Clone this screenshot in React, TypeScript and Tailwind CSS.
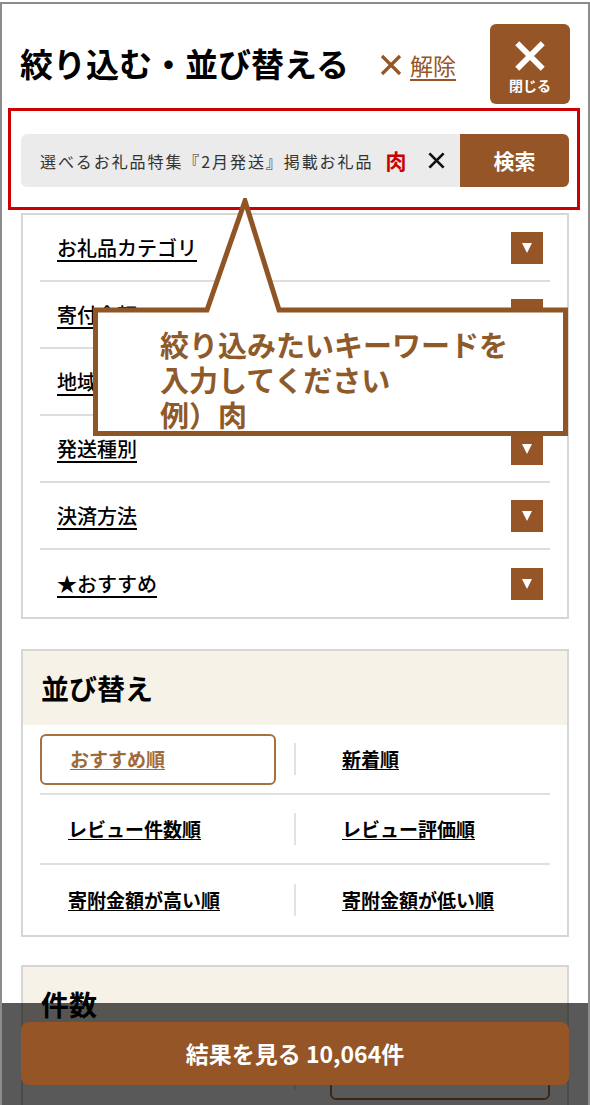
import React from "react";

const FONT = '"Noto Sans CJK JP", "Noto Sans", sans-serif';

const filters = ["お礼品カテゴリ", "寄付金額", "地域", "発送種別", "決済方法", "★おすすめ"];

const sorts: [string, string][] = [
  ["おすすめ順", "新着順"],
  ["レビュー件数順", "レビュー評価順"],
  ["寄附金額が高い順", "寄附金額が低い順"],
];

function Cross({ size, stroke, color }: { size: number; stroke: number; color: string }) {
  return (
    <svg width={size} height={size} viewBox="0 0 24 24" fill="none">
      <path d="M3 3L21 21M21 3L3 21" stroke={color} strokeWidth={stroke} strokeLinecap="butt" />
    </svg>
  );
}

function Chevron() {
  return (
    <span className="flex h-[32px] w-[32px] items-center justify-center bg-[#955526]">
      <svg width="12" height="12" viewBox="0 0 12 12">
        <path d="M1 1H11L6 11Z" fill="#ffffff" />
      </svg>
    </span>
  );
}

function SortRow({ left, right, selected, last }: { left: string; right: string; selected?: boolean; last?: boolean }) {
  return (
    <div className={"grid h-[70px] grid-cols-[236px_1fr_236px] items-center " + (last ? "" : "border-b-2 border-[#e0e0e0]")}>
      <div
        className={
          "flex h-[51px] items-center rounded-md pl-[28px] " +
          (selected ? "border-2 border-[#a8703f]" : "")
        }
      >
        <span className={"whitespace-nowrap text-[19px] font-bold underline underline-offset-2 " + (selected ? "text-[#a06a38]" : "text-black")}>
          {left}
        </span>
      </div>
      <div className="flex justify-center">
        <span className="h-[32px] w-[2px] bg-[#e2e2e2]" />
      </div>
      <div className="flex h-[51px] items-center pl-[28px]">
        <span className="whitespace-nowrap text-[19px] font-bold text-black underline underline-offset-2">{right}</span>
      </div>
    </div>
  );
}

export default function App() {
  return (
    <div className="h-[1105px] w-[590px] overflow-hidden bg-white pt-[2px]" style={{ fontFamily: FONT }}>
      <div className="relative h-[1103px] border-x-2 border-t-2 border-[#8c8c8c] bg-white">
        {/* header */}
        <div className="flex items-center pl-[18px] pr-[18px] pt-[20px]">
          <h1 className="whitespace-nowrap text-[33px] font-bold text-black">絞り込む・並び替える</h1>
          <div className="ml-[30px] flex items-center gap-[7px] pt-[2px] text-[#955526]">
            <Cross size={24} stroke={3.2} color="#955526" />
            <span className="text-[23px] underline underline-offset-4">解除</span>
          </div>
          <button className="ml-auto flex h-[80px] w-[80px] flex-col items-center justify-center rounded-md bg-[#955526] pt-[2px]">
            <Cross size={34} stroke={4} color="#ffffff" />
            <span className="mt-[5px] text-[14px] font-bold leading-none text-white">閉じる</span>
          </button>
        </div>

        {/* search (highlighted) */}
        <div className="ml-[6px] mr-[8px] mt-[4px] h-[102px] border-[3px] border-[#cc0000] pl-[10px] pr-[8px] pt-[23px]">
          <div className="flex h-[53px] overflow-hidden rounded-md">
            <div className="flex flex-1 items-center bg-[#ebebeb] pl-[19px] pr-[14px]">
              <span className="whitespace-nowrap text-[16px] tracking-[0.12em] text-[#333333]">選べるお礼品特集『2月発送』掲載お礼品</span>
              <span className="ml-[12px] text-[21px] font-bold text-[#cc0000]">肉</span>
              <span className="ml-auto">
                <Cross size={19} stroke={3.4} color="#111111" />
              </span>
            </div>
            <button className="w-[109px] bg-[#955526] text-[21px] font-bold text-white">検索</button>
          </div>
        </div>

        {/* filter list */}
        <div className="mx-[19px] mt-[3px] border-2 border-[#d6d6d6] px-[17px]">
          {filters.map((f, i) => (
            <div
              key={f}
              className={
                "flex h-[67px] items-center justify-between pl-[17px] pr-[7px] " +
                (i < filters.length - 1 ? "border-b-2 border-[#dddddd]" : "")
              }
            >
              <span className="text-[20px] font-medium text-black underline underline-offset-4">{f}</span>
              <Chevron />
            </div>
          ))}
        </div>

        {/* sort */}
        <div className="mx-[19px] mt-[30px] border-2 border-[#d6d6d6]">
          <div className="flex h-[74px] items-center bg-[#f7f2e7] pl-[18px]">
            <h2 className="text-[28px] font-bold text-black">並び替え</h2>
          </div>
          <div className="px-[17px]">
            {sorts.map(([l, r], i) => (
              <SortRow key={l} left={l} right={r} selected={i === 0} last={i === sorts.length - 1} />
            ))}
          </div>
        </div>

        {/* count */}
        <div className="mx-[19px] mt-[28px] border-2 border-[#d6d6d6]">
          <div className="flex h-[72px] items-center bg-[#f7f2e7] pl-[18px] pt-[2px]">
            <h2 className="text-[28px] font-bold text-black">件数</h2>
          </div>
          <div className="grid h-[70px] grid-cols-[220px_1fr_220px] items-center px-[17px]">
            <div className="pl-[22px]">
              <span className="text-[19px] font-bold underline underline-offset-2">20件</span>
            </div>
            <div className="flex justify-center">
              <span className="h-[32px] w-[2px] bg-[#e2e2e2]" />
            </div>
            <div className="flex h-[51px] items-center rounded-md border-2 border-[#a8703f] pl-[28px]">
              <span className="text-[19px] font-bold text-[#a06a38] underline underline-offset-2">40件</span>
            </div>
          </div>
        </div>

        {/* callout */}
        <div className="absolute left-[91px] top-[194px] h-[238px] w-[475px]">
          <svg className="absolute inset-0" width="475" height="238" viewBox="0 0 475 238">
            <path
              d="M2.5 112 L114 112 L152 3 L186 112 L472.5 112 L472.5 235.5 L2.5 235.5 Z"
              fill="#ffffff"
              stroke="#8f5525"
              strokeWidth="5"
              strokeLinejoin="miter"
            />
          </svg>
          <div className="absolute left-[67px] top-[129px] whitespace-nowrap text-[29px] font-bold leading-[35px] text-[#8f5a2a]">
            <p>絞り込みたいキーワードを</p>
            <p>入力してください</p>
            <p>例）肉</p>
          </div>
        </div>

        {/* bottom bar */}
        <div className="absolute bottom-0 left-0 right-0 h-[102px] bg-black/65 px-[19px] pt-[19px]">
          <button className="flex h-[63px] w-full items-center justify-center rounded-lg bg-[#955526] text-[23px] font-bold text-white">
            結果を見る 10,064件
          </button>
        </div>
      </div>
    </div>
  );
}
